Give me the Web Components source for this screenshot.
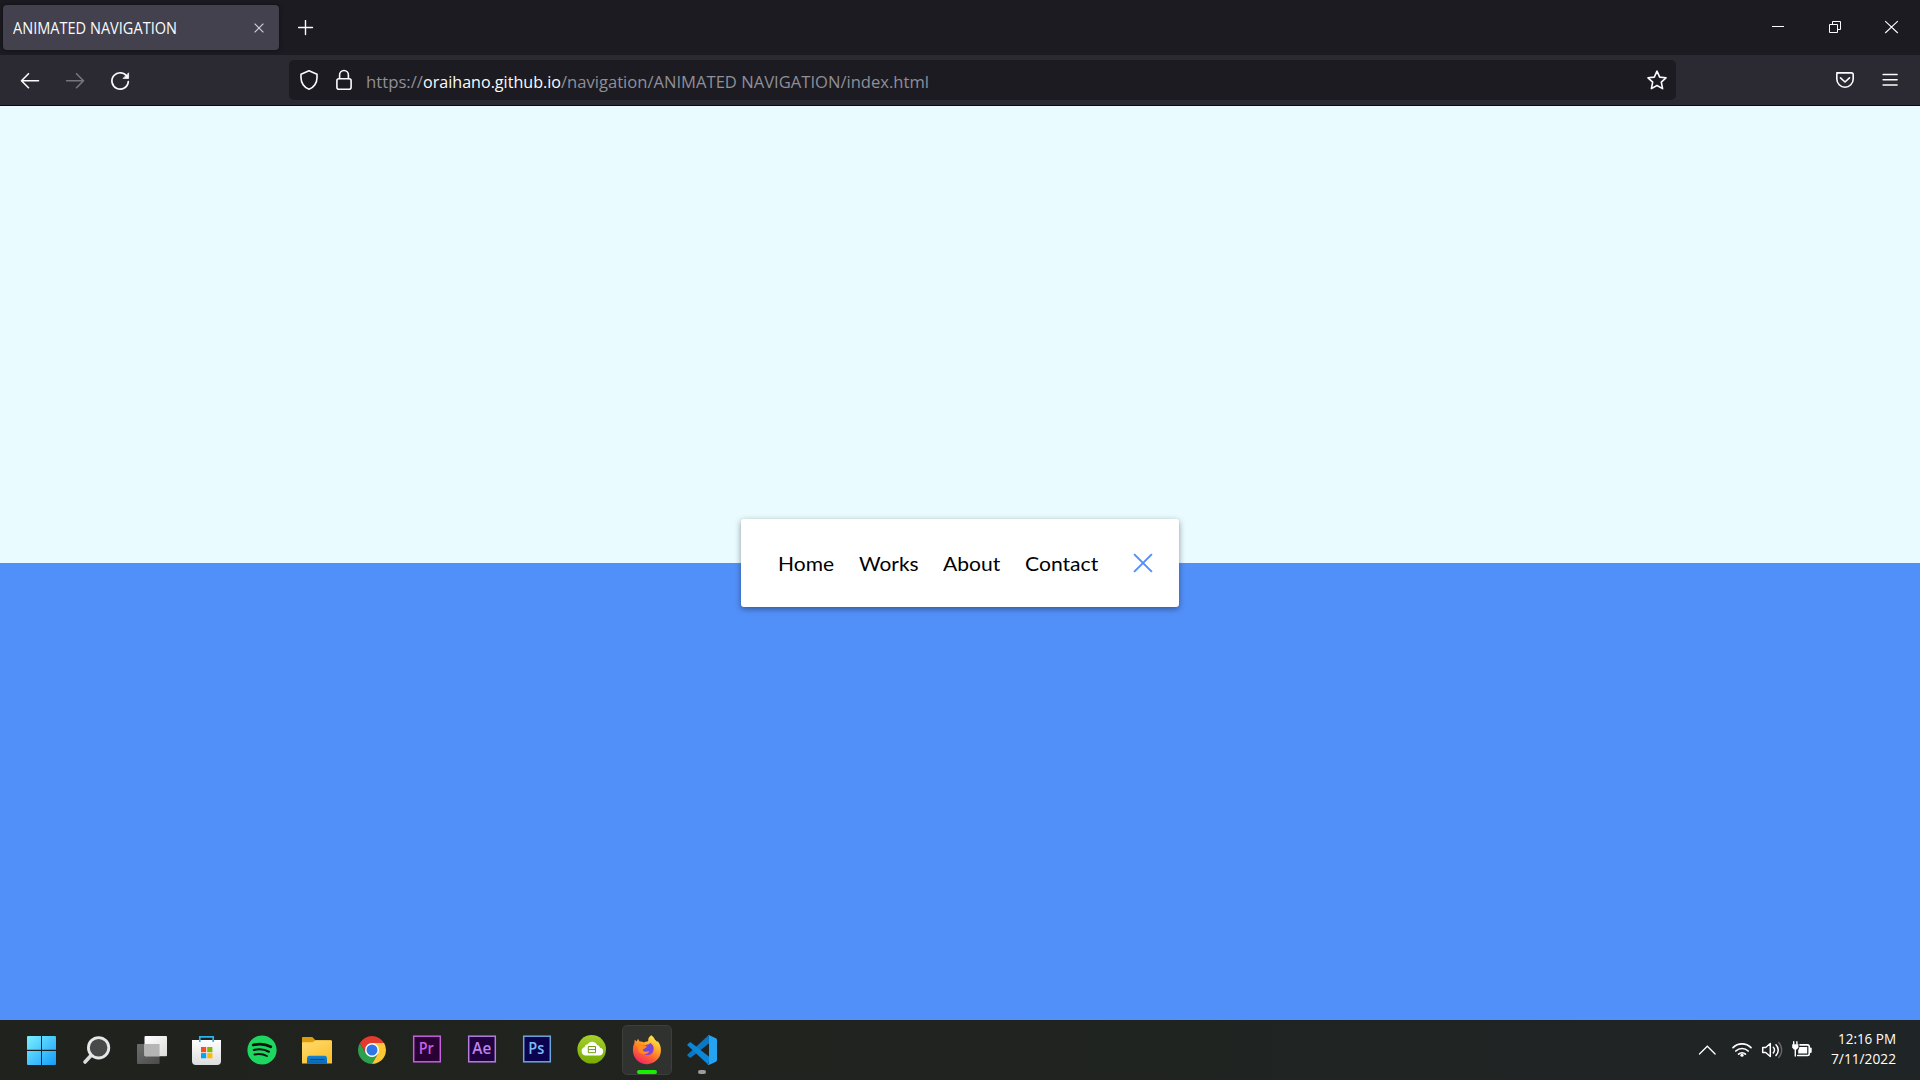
<!DOCTYPE html>
<html lang="en">
<head>
<meta charset="utf-8">
<title>ANIMATED NAVIGATION</title>
<style>
  html, body { margin: 0; height: 100%; overflow: hidden; }
  body { font-family: "Open Sans", "Noto Sans", sans-serif; }
</style>
</head>
<body>
<desktop-screen>
  <tab-strip slot="tabs"><fit-text w="164">ANIMATED NAVIGATION</fit-text></tab-strip>
  <tool-bar slot="tools">
    <fit-text w="57">https://</fit-text><fit-text w="138" style="color:#fbfbfe">oraihano.github.io</fit-text><fit-text w="368">/navigation/ANIMATED NAVIGATION/index.html</fit-text>
  </tool-bar>
  <split-page slot="page">
    <nav-card>
      <nav-link w="56">Home</nav-link>
      <nav-link w="59.6">Works</nav-link>
      <nav-link w="57.3">About</nav-link>
      <nav-link w="73.3">Contact</nav-link>
    </nav-card>
  </split-page>
  <task-bar slot="taskbar"></task-bar>
</desktop-screen>

<script>
const define = (name, html, after) => {
  const tpl = document.createElement('template');
  tpl.innerHTML = html;
  customElements.define(name, class extends HTMLElement {
    constructor() {
      super();
      this.attachShadow({ mode: 'open' }).append(tpl.content.cloneNode(true));
    }
    connectedCallback() { if (after) after(this); }
  });
};

// Scales a run of text horizontally so that it fills exactly w pixels.
const fit = el => {
  const span = el.shadowRoot.querySelector('span');
  const w = +el.getAttribute('w');
  span.style.transform = 'none';
  const natural = span.getBoundingClientRect().width;
  el.style.width = w + 'px';
  if (natural) span.style.transform = `scaleX(${w / natural})`;
};

define('desktop-screen', `
<style>
  :host { display: grid; grid-template-rows: 55px 51px 914px 60px; width: 1920px; height: 1080px; }
</style>
<slot name="tabs"></slot><slot name="tools"></slot><slot name="page"></slot><slot name="taskbar"></slot>`);

define('tab-strip', `
<style>
  :host { display: flex; align-items: flex-start; background: #1c1b22; height: 55px; color: #fbfbfe; font-size: 15.500px; }
  .tab { box-sizing: border-box; width: 276px; height: 45px; margin: 5px 0 0 3px; padding-left: 10px; border-radius: 4px;
    background: #42414d; box-shadow: 0 0 4px rgba(0,0,0,.5); display: flex; align-items: center; justify-content: space-between; }
  .title { line-height: 45px; padding-top: 1px; }
  .x { margin-right: 15px; }
  .plus { margin: 20px 0 0 19px; }
  .win { margin-left: auto; display: flex; }
  svg { display: block; fill: none; stroke: #fbfbfe; }
</style>
<div class="tab"><div class="title"><slot></slot></div>
  <svg class="x" width="10" height="10" viewBox="0 0 10 10" style="stroke:#cfcfd6"><path d="M.6.6l8.800 8.800M9.400.6L.6 9.400" stroke-width="1.200"/></svg></div>
<svg class="plus" width="16" height="16" viewBox="0 0 16 16"><path d="M7.500.5v14M.5 7.500h14" stroke-width="1.400" stroke-linecap="round"/></svg>
<div class="win">
  <svg width="57" height="55"><path d="M22 26.500h12" /></svg>
  <svg width="57" height="55"><path d="M22.500 24.500h8v8h-8zM25.500 24.500v-3h8v8h-3"/></svg>
  <svg width="56" height="55"><path d="M21.200 21.200L33.800 33M33.800 21.200L21.200 33" stroke-width="1.100"/></svg>
</div>`);

define('tool-bar', `
<style>
  :host { box-sizing: border-box; display: flex; align-items: flex-start; height: 51px; background: #2b2a33; border-bottom: 1px solid #0c0c0d;
    color: #8f8f98; font-size: 17px; }
  svg { display: block; fill: none; stroke: #fbfbfe; stroke-width: 1.600; stroke-linecap: round; stroke-linejoin: round; flex: none; }
  .left { width: 289px; display: flex; padding-left: 7px; box-sizing: border-box; }
  .url { box-sizing: border-box; width: 1387px; height: 40px; margin-top: 5px; border-radius: 5px; background: #1c1b22; display: flex; }
  .text { display: flex; margin-left: 10.500px; line-height: 38px; padding-top: 3px; height: 37px; }
  .star { margin-left: auto; }
  .right { margin-left: auto; }
</style>
<div class="left">
  <svg width="45" height="50"><path d="M14.600 25.700H31.500M21.500 18.700l-7 7 7 7"/></svg>
  <svg width="45" height="50" style="stroke:#77767e"><path d="M14.600 25.700H31.500M24.500 18.700l7 7-7 7"/></svg>
  <svg width="45" height="50" style="stroke-width:1.700"><path d="M30.200 21.800A8.200 8.200 0 1 0 31.300 26.600"/><path d="M31.600 18.200v5.200h-5.200z" fill="#fbfbfe" stroke-width=".8"/></svg>
</div>
<div class="url">
  <svg width="38" height="40"><path d="M20 10.800l8 3.400v3.600c0 5-3 9.800-8 11.400-5-1.600-8-6.400-8-11.400v-3.600z"/></svg>
  <svg width="28" height="40"><rect x="9.900" y="18.800" width="14.200" height="10.400" rx="2"/><path d="M12.600 18.500v-3.600a4.400 4.400 0 0 1 8.800 0v3.600"/></svg>
  <div class="text"><slot></slot></div>
  <svg class="star" width="38" height="40"><path d="M19 11.200l2.700 5.900 6.300.7-4.700 4.400 1.300 6.400-5.600-3.100-5.600 3.100 1.300-6.400L10 17.800l6.300-.7z"/></svg>
</div>
<svg class="right" width="207" height="50"><path d="M124.500 17.900h14.600a1.800 1.800 0 0 1 1.800 1.800v4.300a8.200 8.200 0 0 1-16.400 0v-4.300a1.800 1.800 0 0 1 1.800-1.800z" transform="translate(-.7 0)"/><path d="M127.500 22.800l4.500 4.200 4.500-4.200"/><path d="M170.100 19.500h14M170.100 24.700h14M170.100 29.900h14" stroke-width="1.500"/></svg>`);

define('fit-text', `<style>
  :host { display: block; }
  span { display: inline-block; white-space: nowrap; transform-origin: 0 50%; }
</style><span><slot></slot></span>`, fit);

define('nav-link', `<style>
  :host { display: block; font: 20px/24px Lato, sans-serif; color: #000; }
  span { display: inline-block; white-space: nowrap; transform-origin: 0 50%; }
</style><span><slot></slot></span>`, fit);

define('nav-card', `
<style>
  :host { box-sizing: border-box; display: flex; align-items: center; width: 438px; height: 88px; background: #fff; border-radius: 3px;
    box-shadow: 0 2px 6px rgba(0,0,0,.4); padding: 0 25.700px 0 36.800px; }
  .links { display: flex; gap: 24.800px; }
  svg { display: block; margin-left: auto; }
</style>
<div class="links"><slot></slot></div>
<svg width="20" height="20" viewBox="0 0 20 20"><path d="M1.100 1.100l17.800 17.800M18.900 1.100L1.100 18.900" fill="none" stroke="#5290f9" stroke-width="2"/></svg>`);

define('split-page', `
<style>
  :host { display: flex; align-items: center; justify-content: center; height: 914px;
    background: linear-gradient(to bottom, #eafbff 0 50%, #5290f9 50% 100%); }
</style><slot></slot>`);

define('app-slot', `
<style>
  :host { display: block; width: 55px; height: 60px; flex: none; }
</style><slot></slot>`);

const adobe = (label, x, len, line, bg, col) => `
  <rect x="14.700" y="16.200" width="26.600" height="25.600" fill="${bg}" stroke="${line}" stroke-width="1.500"/>
  <text x="${x}" y="34.400" textLength="${len}" lengthAdjust="spacingAndGlyphs" font-family="Open Sans, sans-serif" font-weight="600" font-size="16.500" fill="${col}">${label}</text>`;

const apps = [
  `<defs><linearGradient id="s" x1="13" y1="16" x2="42" y2="45" gradientUnits="userSpaceOnUse"><stop stop-color="#7cf0ff"/><stop offset="1" stop-color="#149cfa"/></linearGradient></defs>
   <path fill="url(#s)" d="M14 16h13v13.800H13V17a1 1 0 0 1 1-1zM28 16h13a1 1 0 0 1 1 1v12.800H28zM13 31h14v14H14a1 1 0 0 1-1-1zM28 31h14v13a1 1 0 0 1-1 1H28z"/>`,
  `<path d="M22 35.500l-6 6.500" stroke="#dcdddf" stroke-width="3.600" stroke-linecap="round"/><circle cx="29.600" cy="27.800" r="10.200" fill="#484a49" stroke="#e6e7e8" stroke-width="2.800"/>`,
  `<defs><linearGradient id="t" x1="0" y1="0" x2="1" y2="1"><stop stop-color="#fff"/><stop offset="1" stop-color="#dcdcdc"/></linearGradient><linearGradient id="g" x1="0" y1="0" x2="1" y2="1"><stop stop-color="#6d6d6d"/><stop offset="1" stop-color="#4b4b4b"/></linearGradient></defs>
   <rect x="13" y="24" width="22.600" height="20" rx="1" fill="url(#g)"/><rect x="20.500" y="16" width="22.500" height="20.300" rx="1" fill="url(#t)"/><path d="M20.500 24h15.100v12.300H21.500a1 1 0 0 1-1-1z" fill="#b5b5b5"/>`,
  `<defs><linearGradient id="b" x1="0" y1="0" x2="0" y2="1"><stop stop-color="#fff"/><stop offset="1" stop-color="#dcdcdc"/></linearGradient></defs>
   <path d="M13 20h29v21a4 4 0 0 1-4 4H17a4 4 0 0 1-4-4z" fill="url(#b)"/><path d="M20.800 22v-5.200h13.400V22" fill="none" stroke="#28b4ee" stroke-width="1.700"/>
   <path d="M22 27h5.200v5.200H22z" fill="#f25022"/><path d="M28.200 27h5.200v5.200h-5.200z" fill="#7fba00"/><path d="M22 33.100h5.200v5.200H22z" fill="#00a4ef"/><path d="M28.200 33.100h5.200v5.200h-5.200z" fill="#ffb900"/>`,
  `<circle cx="28" cy="30" r="14.600" fill="#1ed760"/><g fill="none" stroke="#0a140d" stroke-linecap="round"><path d="M19.200 25c6-1.600 12.500-1 17.600 1.800" stroke-width="2.700"/><path d="M19.900 30c5-1.300 10.500-.8 15 1.700" stroke-width="2.200"/><path d="M20.500 34.500c4.400-1 8.600-.6 12.400 1.500" stroke-width="1.900"/></g>`,
  `<defs><linearGradient id="f" x1="0" y1="0" x2=".7" y2="1"><stop stop-color="#ffdc70"/><stop offset="1" stop-color="#fdc02f"/></linearGradient><linearGradient id="fb" x1="0" y1="0" x2="0" y2="1"><stop stop-color="#1683d3"/><stop offset="1" stop-color="#0a66b4"/></linearGradient></defs>
   <path d="M13 18a1 1 0 0 1 1-1h9.300l3.200 3.200H42v8H13z" fill="#dd9c08"/><path d="M13 22.200h10.500l3-2H42a1 1 0 0 1 1 1V43.500H13z" fill="url(#f)"/><path d="M18 43.700v-5.500a2.400 2.400 0 0 1 2.400-2.400h15.200a2.400 2.400 0 0 1 2.400 2.400v5.500z" fill="url(#fb)"/><path d="M21.800 39.500h12.800" stroke="#0b4a80" stroke-width="1.200" stroke-linecap="round"/>`,
  `<path d="M15.880 23A14 14 0 0 0 28 44l6-10.500L28 30l-6 3.500z" fill="#2da04c"/><path d="M28 23h12.120A14 14 0 0 1 28 44l6.060-10.500z" fill="#fcc934"/><path d="M15.880 23a14 14 0 0 1 24.240 0H28l-6 10.500z" fill="#e33b2e"/><circle cx="28" cy="30" r="7" fill="#fff"/><circle cx="28" cy="30" r="5.500" fill="#2f76e8"/>`,
  adobe('Pr', 19.8, 15, '#c561dc', '#2a0134', '#c561e0'),
  adobe('Ae', 18.3, 19, '#b47de0', '#1f0140', '#bd84ea'),
  adobe('Ps', 19.3, 16, '#6ea6dc', '#0c0350', '#7bbcf4'),
  `<defs><linearGradient id="c" x1="0" y1="0" x2="0" y2="1"><stop stop-color="#a5d02a"/><stop offset="1" stop-color="#76ac00"/></linearGradient></defs>
   <circle cx="27.700" cy="29.300" r="14.300" fill="url(#c)"/><path d="M21.200 35.400a4.400 4.400 0 0 1-.6-8.500 3.400 3.400 0 0 1 3-2.700 5.600 5.600 0 0 1 9.700.8 4.200 4.200 0 0 1 2.800 2.700 3.900 3.900 0 0 1-1 7.700z" fill="#fff"/><path d="M24.300 26.500h7.200v6.200h-7.200zM24.300 29.600h7.200" fill="none" stroke="#6f9f0d" stroke-width="1"/>`,
  `<defs><linearGradient id="ff" x1="37" y1="16" x2="22" y2="43" gradientUnits="userSpaceOnUse"><stop stop-color="#fff04e"/><stop offset=".35" stop-color="#ffb02a"/><stop offset=".65" stop-color="#ff6a2e"/><stop offset="1" stop-color="#f22a60"/></linearGradient><radialGradient id="fp"><stop stop-color="#5a50dc"/><stop offset="1" stop-color="#8b3fd6"/></radialGradient></defs>
   <rect x="3.500" y="5.500" width="49" height="49" rx="4.500" fill="#2f322f" stroke="#3b3e3b"/>
   <path d="M32.300 15.200c1.700 1.200 3 2.800 3.700 4.500.9.500 1.500 1.200 2 2.100l.8-.6c2.100 2.500 3.200 5.500 3.100 9a14 14 0 0 1-28 .1c0-2.500.4-5 1.500-7l.3-3.600 2 1.800 1.300-2.700 1.600 2.800c1.600-.3 3 0 4.200.8 1-.3 3-.6 4.400-1.300-.3-2.400.8-4.500 3.100-5.900z" fill="url(#ff)"/>
   <path d="M23.400 25.800c2.900-.6 5.700-.8 8-2.700 2.500 1.300 3.700 3.800 3.200 6.700-.5 3.300-3 5.300-6.200 5.300-3.300 0-6-2.400-6-5.500z" fill="url(#fp)"/><path d="M18 24.500c1.700-1.100 4-.9 5.800.8 1.500.4 3.200.2 4 .9-.3 1.400-1.700 2-3 2.600-.9.600-1.100 1.500-.4 2.200 2 1.800 4-.5 5.800.4-1.800 3.600-7.400 3.700-10.500.4z" fill="#ff8a24"/>
   <rect x="18" y="50" width="20" height="4" rx="2" fill="#16f000"/>`,
  `<path d="M34.500 15.200L13.600 34.400a.9.900 0 0 0 0 1.300l2 1.800a1.200 1.200 0 0 0 1.400 0L35.500 23z" fill="#0b78c6"/><path d="M34.500 45L13.600 25.600a.9.900 0 0 1 0-1.300l2-1.800a1.200 1.200 0 0 1 1.400 0L35.500 37z" fill="#0c86d6"/><path d="M34.800 15l7.200 3.300a1.800 1.800 0 0 1 1 1.600v20.200a1.800 1.800 0 0 1-1 1.600L34.800 45c-.9.300-1.600 0-2-.5.900.5 2.200 0 2.200-1.300V16.800c0-1.300-1.300-1.800-2.200-1.300.4-.5 1.100-.8 2-.5z" fill="#26a3f0"/><rect x="24" y="50" width="8" height="4" rx="2" fill="#9a9b9a"/>`
];

define('task-bar', `
<style>
  :host { display: flex; height: 60px; background: linear-gradient(90deg, #20221e, #20231f 50%, #1f2426); color: #fff; font-size: 15.300px; }
  .apps { display: flex; padding-left: 14px; }
  svg { display: block; }
  .tray { margin-left: auto; display: flex; }
  .clock { display: flex; flex-direction: column; align-items: flex-end; padding: 8px 24px 0 0; line-height: 20px; width: 84px; box-sizing: content-box; }
</style>
<div class="apps">${apps.map(a => `<app-slot><svg width="55" height="60">${a}</svg></app-slot>`).join('')}</div>
<div class="tray">
  <svg width="124" height="60" fill="none" stroke="#fff" stroke-linecap="round">
    <path d="M11.500 34l7.800-7.800 7.800 7.800" stroke-width="1.300"/>
    <g stroke-width="1.700"><path d="M45 27.600a12.800 12.800 0 0 1 18 0"/><path d="M47.800 31a9 9 0 0 1 12.400 0" /><path d="M50.600 34.100a5 5 0 0 1 6.800 0"/></g><circle cx="54" cy="35.200" r="1.600" fill="#fff" stroke="none"/>
    <path d="M74.700 27.500h3l4.600-4v13l-4.600-4h-3z" stroke-width="1.500" stroke-linejoin="round"/><path d="M85.300 27.200a4 4 0 0 1 0 5.700M88 24.700a7.500 7.500 0 0 1 0 10.700" stroke-width="1.500"/><path d="M90.700 22.500a11 11 0 0 1 0 15" stroke="#666" stroke-width="1.400"/>
    <path d="M112 24.900h7.500a1.700 1.700 0 0 1 1.700 1.700v7.200a1.700 1.700 0 0 1-1.700 1.700h-9.800" stroke-width="1.600"/><path d="M122.700 28.500v3.500" stroke-width="2"/><path d="M111.500 26.900h7.700v6.600h-9v-3z" fill="#fff" stroke="none"/><path d="M104.200 24.200h6.200v3.300l-1.700 1.900h-2.800l-1.700-1.900z" fill="#fff" stroke="none"/><path d="M105.700 21.700v2.500M108.900 21.700v2.500M107.300 29v7" stroke-width="1.400"/>
  </svg>
  <div class="clock"><fit-text w="58">12:16 PM</fit-text><fit-text w="65">7/11/2022</fit-text></div>
</div>`);
</script>
</body>
</html>
